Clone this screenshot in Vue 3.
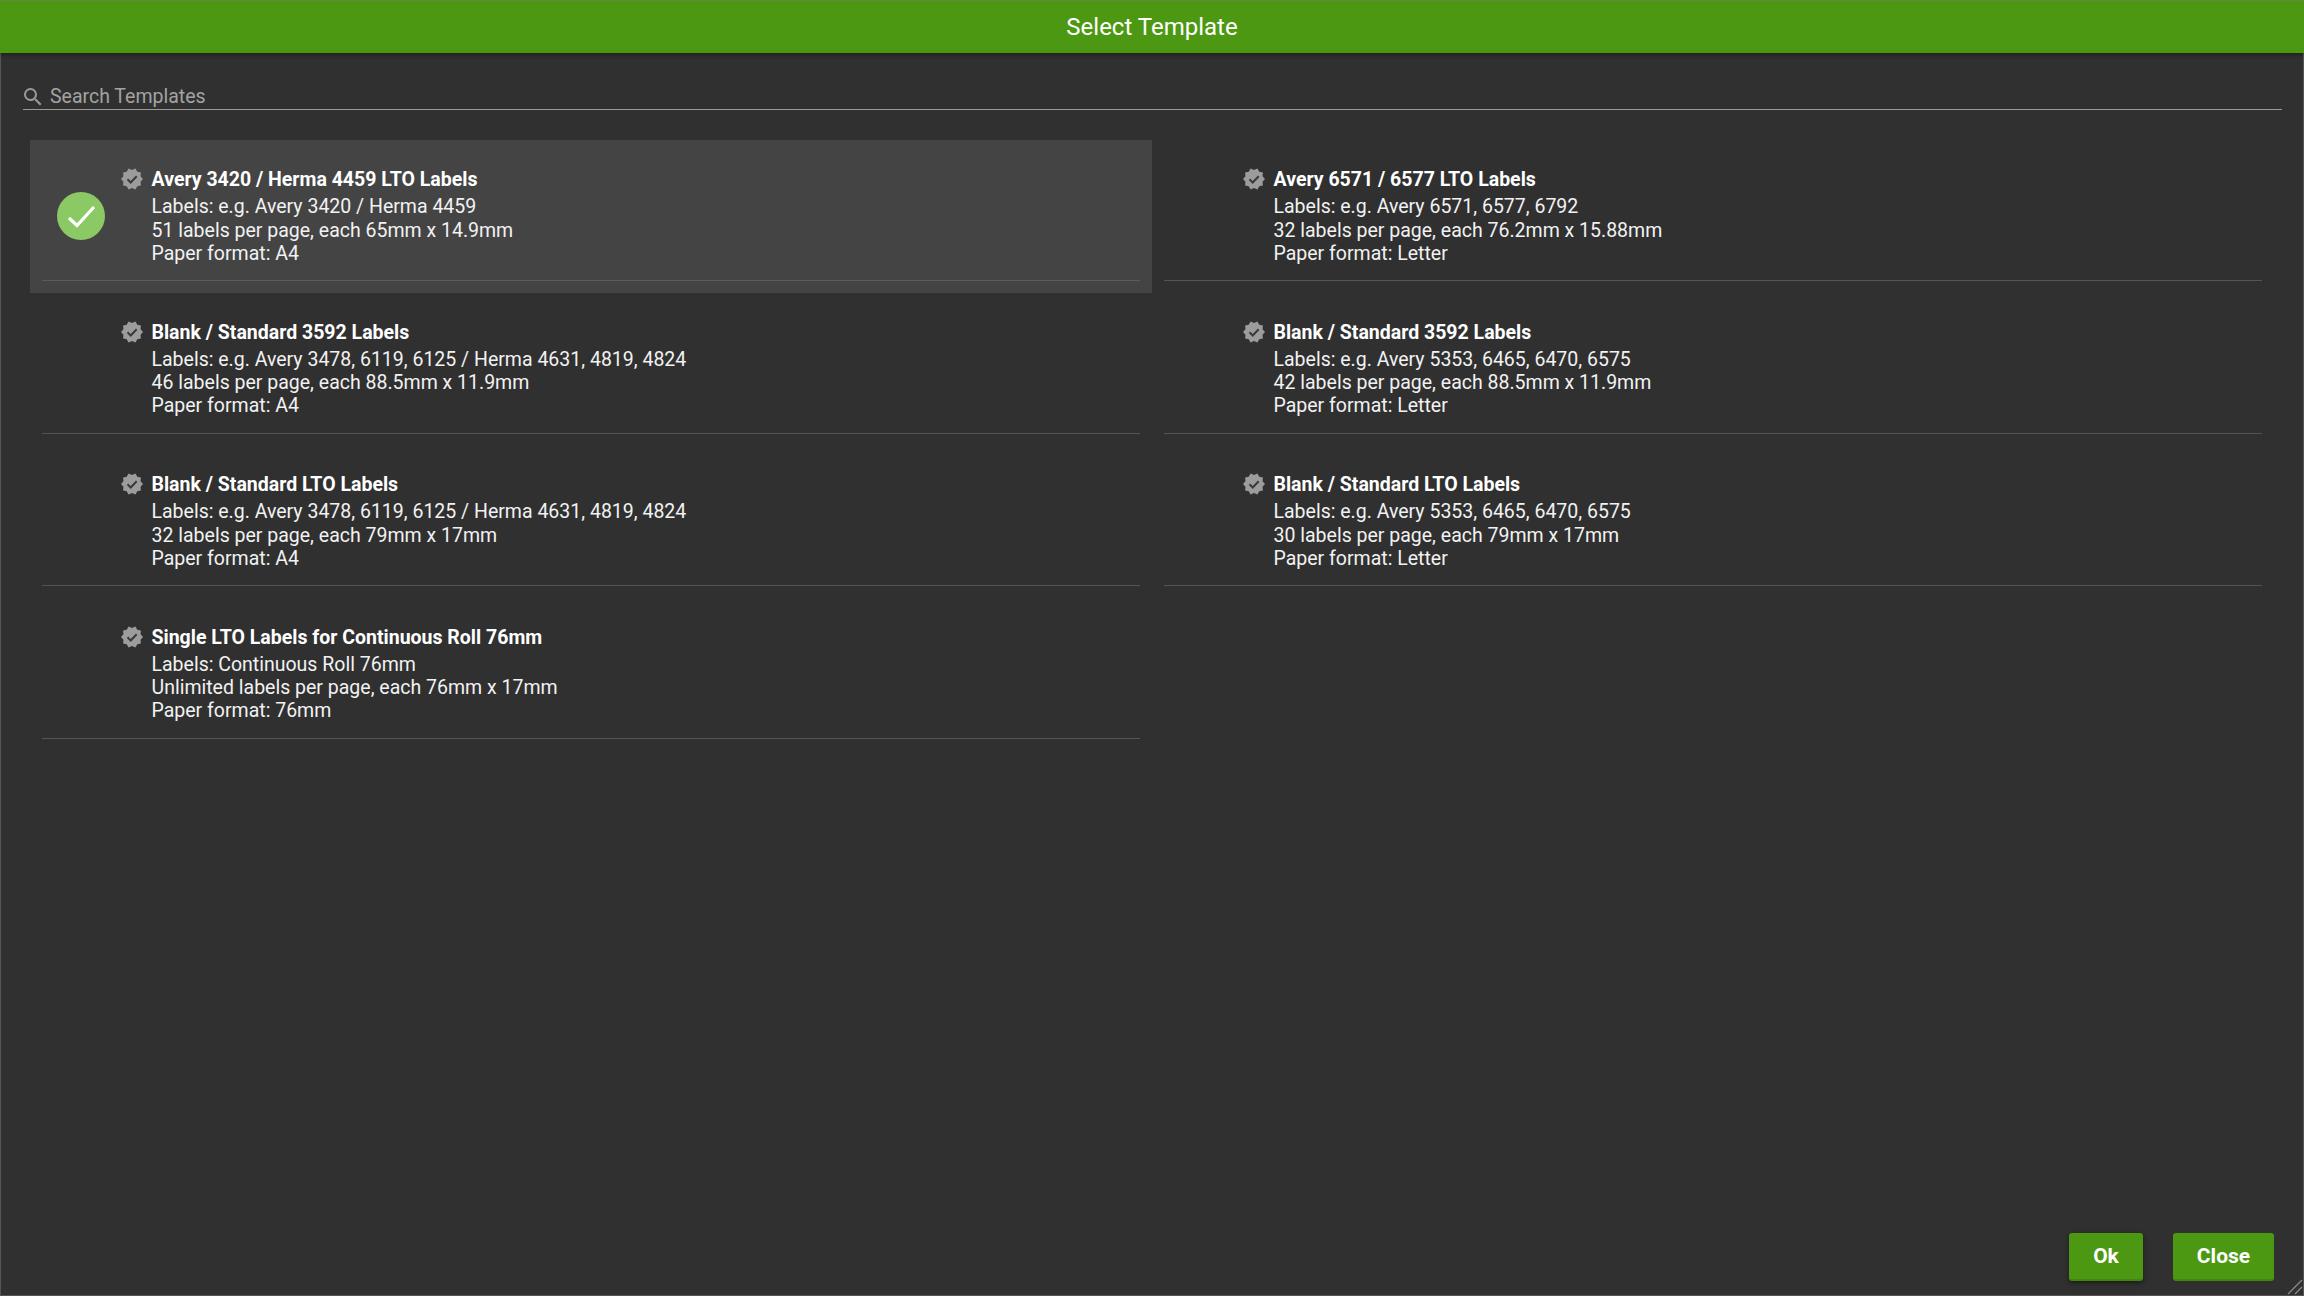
<script setup>
const items = [
  { title: 'Avery 3420 / Herma 4459 LTO Labels', l: 'Labels: e.g. Avery 3420 / Herma 4459', c: '51 labels per page, each 65mm x 14.9mm', p: 'Paper format: A4', sel: true },
  { title: 'Avery 6571 / 6577 LTO Labels', l: 'Labels: e.g. Avery 6571, 6577, 6792', c: '32 labels per page, each 76.2mm x 15.88mm', p: 'Paper format: Letter' },
  { title: 'Blank / Standard 3592 Labels', l: 'Labels: e.g. Avery 3478, 6119, 6125 / Herma 4631, 4819, 4824', c: '46 labels per page, each 88.5mm x 11.9mm', p: 'Paper format: A4' },
  { title: 'Blank / Standard 3592 Labels', l: 'Labels: e.g. Avery 5353, 6465, 6470, 6575', c: '42 labels per page, each 88.5mm x 11.9mm', p: 'Paper format: Letter' },
  { title: 'Blank / Standard LTO Labels', l: 'Labels: e.g. Avery 3478, 6119, 6125 / Herma 4631, 4819, 4824', c: '32 labels per page, each 79mm x 17mm', p: 'Paper format: A4' },
  { title: 'Blank / Standard LTO Labels', l: 'Labels: e.g. Avery 5353, 6465, 6470, 6575', c: '30 labels per page, each 79mm x 17mm', p: 'Paper format: Letter' },
  { title: 'Single LTO Labels for Continuous Roll 76mm', l: 'Labels: Continuous Roll 76mm', c: 'Unlimited labels per page, each 76mm x 17mm', p: 'Paper format: 76mm' },
]
</script>

<template>
  <div class="win">
    <header class="head">Select Template</header>
    <div class="search">
      <svg class="mag" viewBox="0 0 24 24" width="24" height="24"><path fill="#9a9a9a" d="M15.5 14h-.79l-.28-.27A6.47 6.47 0 0 0 16 9.5 6.5 6.5 0 1 0 9.5 16c1.61 0 3.09-.59 4.23-1.57l.27.28v.79l5 4.99L20.49 19l-4.99-5zm-6 0C7.01 14 5 11.99 5 9.5S7.01 5 9.5 5 14 7.01 14 9.5 11.99 14 9.5 14z"/></svg>
      <span class="ph">Search Templates</span>
    </div>
    <div class="grid">
      <div v-for="(it, i) in items" :key="i" class="item" :class="{ sel: it.sel }">
        <div class="inner">
          <div class="mark">
            <svg v-if="it.sel" viewBox="0 0 48 48" width="48" height="48"><circle cx="24" cy="24" r="24" fill="#8bc964"/><path d="M12 26l8 7.500L37 15" fill="none" stroke="#fff" stroke-width="3.200"/></svg>
          </div>
          <svg class="badge" viewBox="0 0 24 24" width="24" height="24"><path fill="#9c9c9c" d="M23 12l-2.440-2.790.34-3.690-3.610-.82-1.890-3.200L12 2.960 8.600 1.500 6.710 4.690 3.100 5.500l.34 3.700L1 12l2.440 2.790-.34 3.700 3.610.82L8.600 22.500l3.400-1.470 3.400 1.460 1.890-3.190 3.610-.82-.34-3.690L23 12z"/><path fill="none" stroke="#3a3a3a" stroke-width="2" d="M7.500 12.300l3.200 3.200 6-6.300"/></svg>
          <div class="text">
            <div class="title">{{ it.title }}</div>
            <div>{{ it.l }}</div>
            <div>{{ it.c }}</div>
            <div>{{ it.p }}</div>
          </div>
        </div>
      </div>
    </div>
    <div class="foot">
      <button class="btn ok">Ok</button>
      <button class="btn close">Close</button>
    </div>
    <svg class="grip" viewBox="0 0 16 16" width="16" height="16"><path d="M1 15L15 1M8 15l7-7" stroke="#8a8a8a" stroke-width="1.300" fill="none"/></svg>
  </div>
</template>

<style>
html, body { margin: 0; background: #303030; }
</style>

<style scoped>
.win {
  position: relative;
  box-sizing: border-box;
  width: 2304px;
  height: 1296px;
  background: #303030;
  border: 1px solid #555;
  border-top: 0;
  display: flex;
  flex-direction: column;
  font-family: Roboto, sans-serif;
  color: #f2f2f2;
}
.head {
  height: 53px;
  margin: 0 -1px;
  background: #4c9812;
  border-top: 1px solid #5f8a45;
  box-sizing: border-box;
  box-shadow: 0 2px 4px rgba(0, 0, 0, .35);
  color: #fff;
  font-size: 24px;
  line-height: 52px;
  text-align: center;
}
.search {
  margin: 29px 21px 0 22px;
  height: 27px;
  border-bottom: 1px solid #9a9a9a;
  display: flex;
  align-items: center;
  gap: 5px;
  flex: none;
}
.mag { flex: none; margin-left: -2px; margin-top: 2px; }
.ph { color: #a3a3a3; font-size: 19.500px; margin-top: 2px; }
.grid {
  margin: 30px 29px 0 29px;
  display: grid;
  grid-template-columns: 1fr 1fr;
  grid-auto-rows: 152.500px;
}
.item { padding: 0 12px; }
.item.sel { background: #444; }
.inner {
  box-sizing: border-box;
  height: 141px;
  border-bottom: 1px solid #555;
  display: flex;
  padding-left: 14px;
  padding-top: 27px;
}
.sel .inner { border-bottom-color: #5c5c5c; }
.mark { width: 48px; height: 48px; margin-top: 25px; margin-left: 1px; margin-right: 14px; flex: none; }
.badge { flex: none; margin-right: 7px; margin-left: 1px; }
.text { font-size: 19.500px; line-height: 23.300px; position: relative; top: 1px; left: .5px; }
.title { font-weight: 700; margin-bottom: 4px; color: #fff; }
.foot {
  position: absolute;
  right: 29px;
  bottom: 14px;
  display: flex;
  gap: 30px;
}
.btn {
  height: 48px;
  border: 0;
  border-radius: 3px;
  background: #4c9812;
  border-bottom: 2px solid #438510;
  box-shadow: 0 2px 5px rgba(0, 0, 0, .45);
  color: #fff;
  font: 700 21px Roboto, sans-serif;
  padding: 0;
}
.ok { width: 74px; }
.close { width: 101px; box-shadow: none; }
.grip { position: absolute; right: 0; bottom: 0; }
</style>
